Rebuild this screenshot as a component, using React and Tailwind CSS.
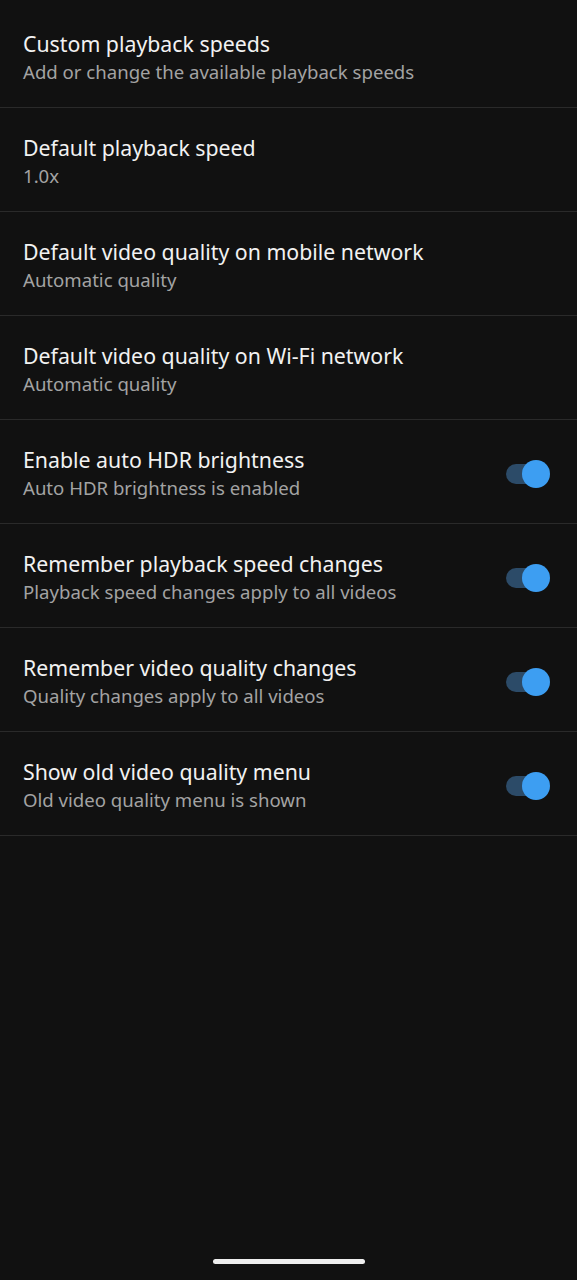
const settings = [
  { title: "Custom playback speeds", sub: "Add or change the available playback speeds" },
  { title: "Default playback speed", sub: "1.0x" },
  { title: "Default video quality on mobile network", sub: "Automatic quality" },
  { title: "Default video quality on Wi-Fi network", sub: "Automatic quality" },
  { title: "Enable auto HDR brightness", sub: "Auto HDR brightness is enabled", toggle: true },
  { title: "Remember playback speed changes", sub: "Playback speed changes apply to all videos", toggle: true },
  { title: "Remember video quality changes", sub: "Quality changes apply to all videos", toggle: true },
  { title: "Show old video quality menu", sub: "Old video quality menu is shown", toggle: true },
];

function Toggle() {
  return (
    <div className="relative h-[20px] w-[44px]">
      <div className="absolute left-0 top-0 h-[20px] w-[36px] rounded-full bg-[#2c4b68]" />
      <div className="absolute right-0 top-[-4px] h-[28px] w-[28px] rounded-full bg-[#3d9ef2]" />
    </div>
  );
}

export default function App() {
  return (
    <div className="relative flex h-[1280px] w-[577px] flex-col bg-[#111111] pt-[4px] font-['Noto_Sans',sans-serif]">
      {settings.map((s) => (
        <div
          key={s.title}
          className="flex items-center justify-between border-b border-[#2a2a2a] pb-[22px] pl-[23px] pr-[27px] pt-[26px]"
        >
          <div>
            <p className="text-[21.3px] leading-[28px] text-[#f2f2f2]">{s.title}</p>
            <p className="text-[18.6px] leading-[27px] text-[#a3a3a3]">{s.sub}</p>
          </div>
          {s.toggle && <Toggle />}
        </div>
      ))}
      <div className="mt-auto mb-[16px] flex justify-center">
        <div className="h-[5px] w-[152px] rounded-full bg-[#eeeeee]" />
      </div>
    </div>
  );
}
